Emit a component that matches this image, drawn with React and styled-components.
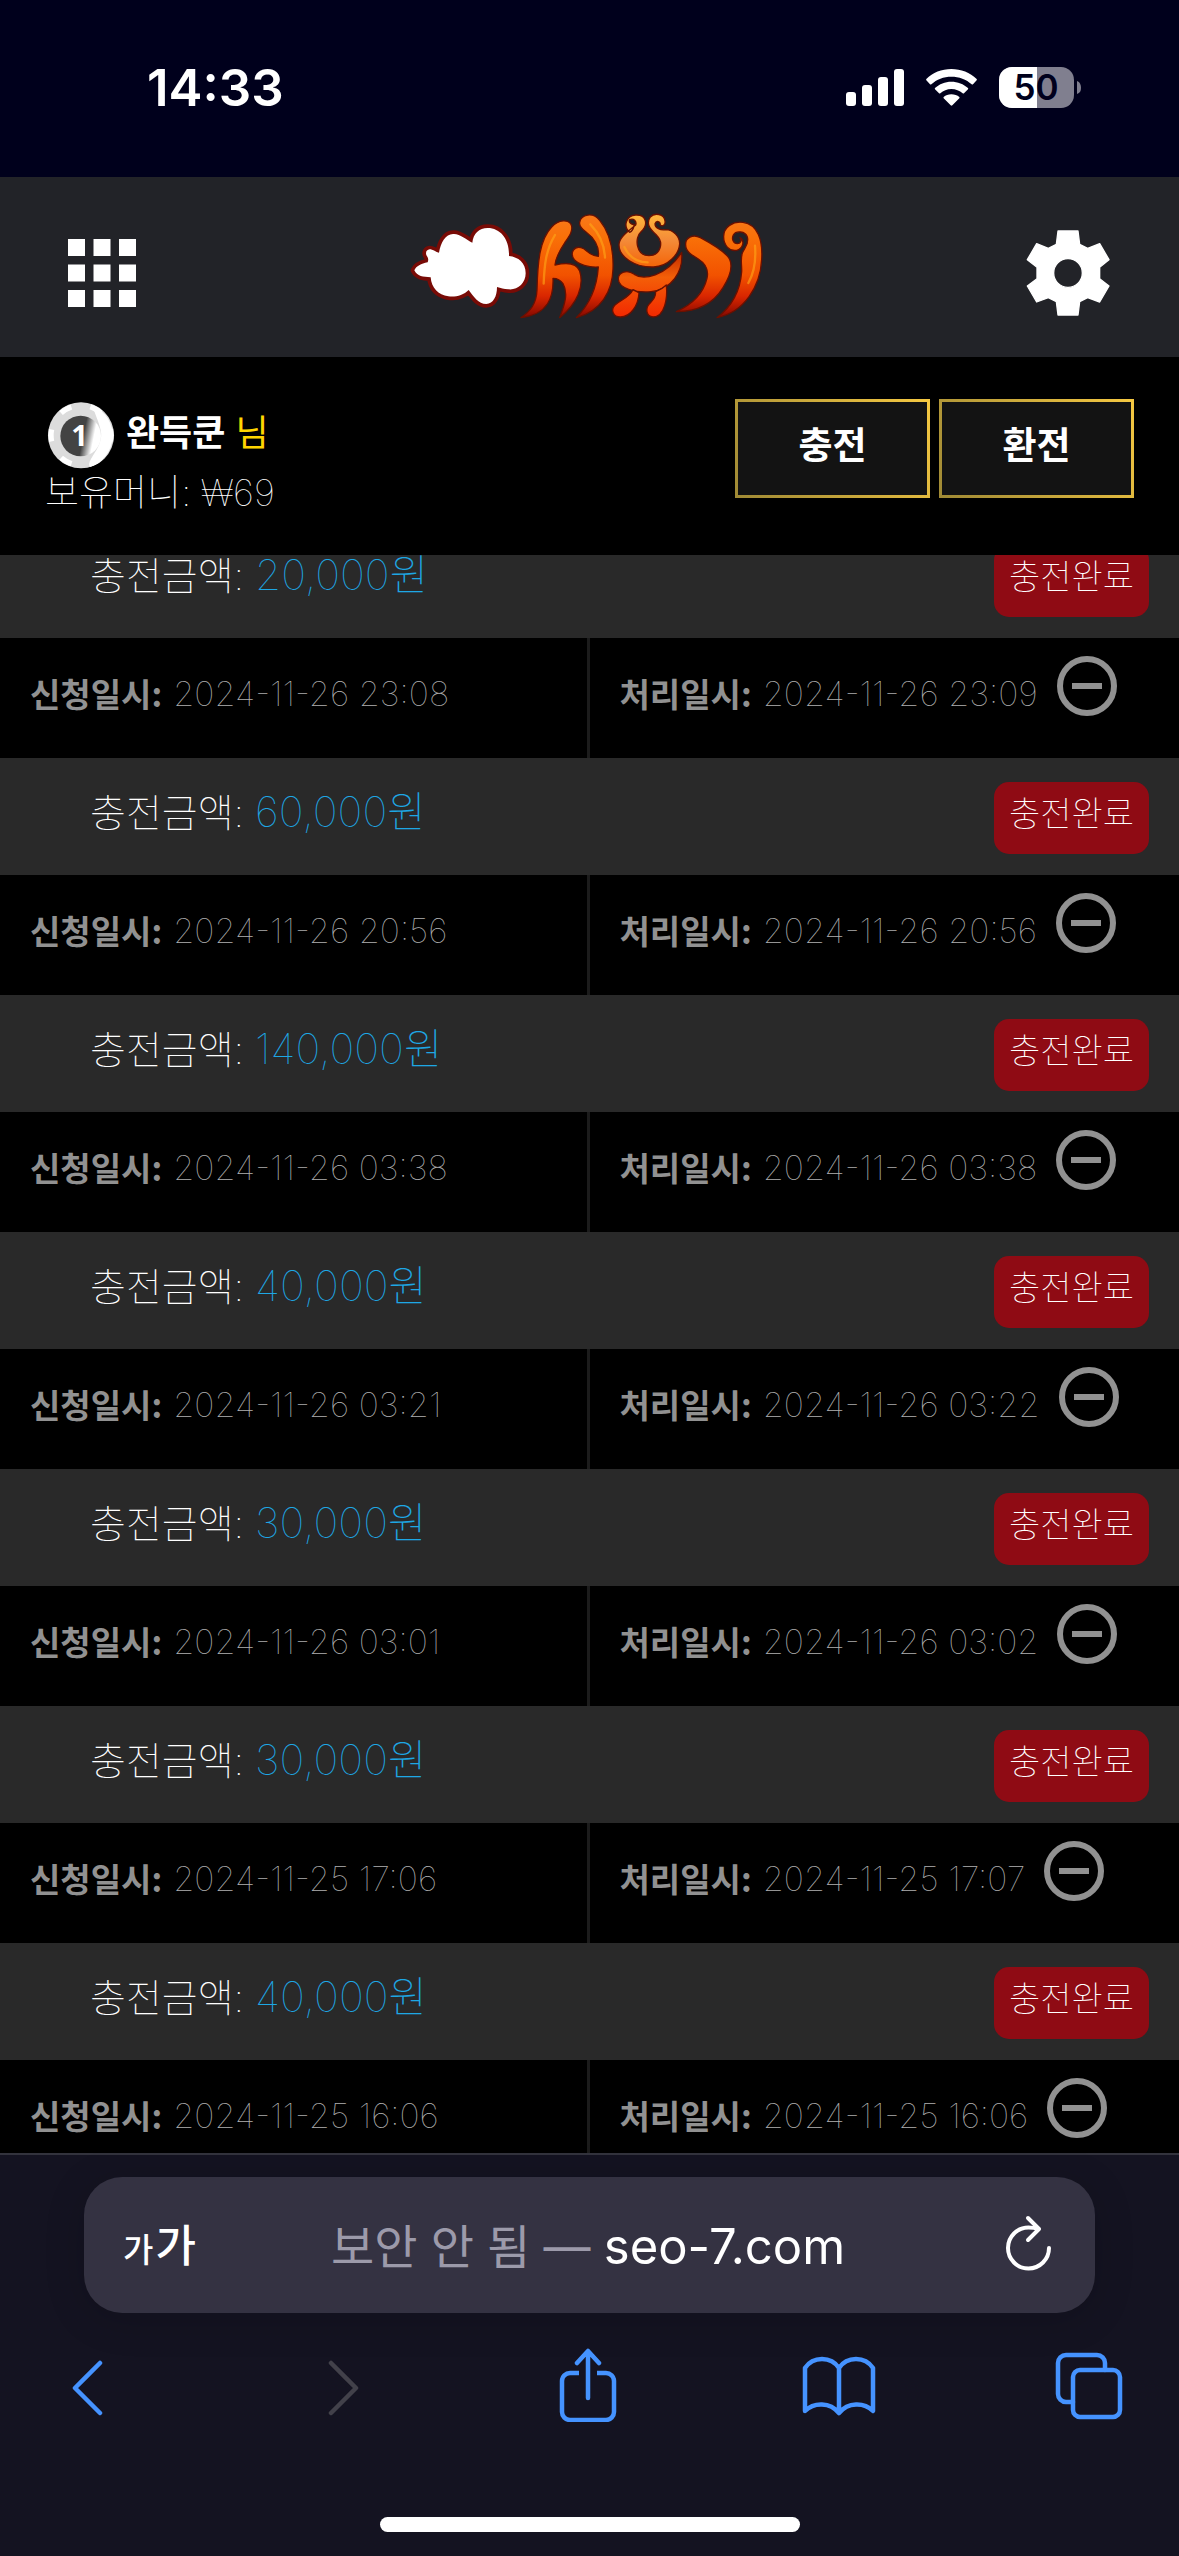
import React, { useLayoutEffect, useRef } from 'react';
import styled, { createGlobalStyle } from 'styled-components';

const GlobalStyle = createGlobalStyle`
  *, *::before, *::after {
    box-sizing: border-box;
  }

  body {
    margin: 0;
    background: #000;
    color: #fff;
    font-family: Inter, "Noto Sans CJK KR", sans-serif;
  }

  button, input {
    margin: 0;
    padding: 0;
    border: 0;
    background: none;
    color: inherit;
    font: inherit;
  }

  svg {
    display: block;
  }
`;

const Screen = styled.div`
  display: flex;
  flex-direction: column;
  height: 100vh;
`;

const StatusBar = styled.div`
  display: flex;
  flex: none;
  align-items: center;
  justify-content: space-between;
  height: 177px;
  padding: 0 98px 2px 147px;
  background: #00001c;
`;

const Clock = styled.time`
  font-size: 51px;
  font-weight: 600;
  line-height: 60px;
`;

const StatusIcons = styled.div`
  display: flex;
  align-items: center;
  gap: 22px;
`;

const Header = styled.header`
  display: grid;
  flex: none;
  grid-template-columns: 1fr auto 1fr;
  align-items: center;
  height: 180px;
  padding: 0 69px 0 68px;
  background: #222328;
`;

const IconButton = styled.button`
  justify-self: ${({ $end }) => ($end ? 'end' : 'start')};
  margin-top: 12px;
  cursor: pointer;
`;

const LogoLink = styled.a`
  display: block;
  margin-bottom: 6px;
`;

const UserPanel = styled.section`
  display: flex;
  flex: none;
  align-items: flex-start;
  justify-content: space-between;
  height: 198px;
  padding: 42px 45px 0;
  background: #000;
`;

const UserName = styled.div`
  display: flex;
  align-items: center;
  gap: 9px;
  height: 72px;
`;

const NameText = styled.div`
  display: flex;
  gap: 10px;
  padding-bottom: 10px;
  font-family: "Noto Sans CJK KR", sans-serif;
  font-size: 36px;
  line-height: 40px;
`;

const Honorific = styled.span`
  color: #ffd500;
`;

const Balance = styled.p`
  margin: 0;
  font-size: 37px;
  font-weight: 100;
  line-height: 44px;
`;

const PanelActions = styled.div`
  display: flex;
  gap: 9px;
`;

const PanelButton = styled.button`
  width: 195px;
  height: 99px;
  padding-bottom: 12px;
  border: 3px solid;
  border-image: linear-gradient(60deg, #a08a35, #f5c842) 1;
  background: #131313;
  font-family: "Noto Sans CJK KR", sans-serif;
  font-size: 37px;
  font-weight: 700;
  cursor: pointer;
`;

const HistoryList = styled.ul`
  flex: 1;
  min-height: 0;
  margin: 0;
  padding: 0;
  overflow-y: auto;
  list-style: none;
  scrollbar-width: none;
`;

const AmountRow = styled.div`
  display: flex;
  align-items: flex-start;
  justify-content: space-between;
  height: 117px;
  padding: 24px 30px 0 90px;
  background: #292929;
`;

const Amount = styled.p`
  margin: 0;
  font-size: 39px;
  font-weight: 100;
  line-height: 60px;
`;

const AmountValue = styled.span`
  color: #1ea7e4;
  font-size: 42px;
`;

const StatusBadge = styled.span`
  height: 72px;
  padding: 0 15px;
  border-radius: 15px;
  background: #8f0b14;
  font-size: 34px;
  font-weight: 100;
  line-height: 64px;
`;

const DateRow = styled.div`
  display: grid;
  grid-template-columns: 1fr 1fr;
  height: 120px;
  background: #000;
`;

const DateCell = styled.div`
  display: flex;
  align-items: flex-start;
  padding: 18px 0 0 30px;
  color: #919191;
  font-size: 34px;
  line-height: 76px;

  &:first-child {
    border-right: 3px solid #1c1c1c;
  }
`;

const DateLabel = styled.strong`
  margin-right: 11px;
  font-family: "Noto Sans CJK KR", sans-serif;
  font-size: 33px;
  line-height: 74px;
`;

const DateValue = styled.time`
  color: #b0b0b0;
  font-weight: 100;
`;

const RemoveButton = styled.button`
  margin-left: 19px;
  cursor: pointer;
`;

const BrowserBar = styled.footer`
  flex: none;
  height: 403px;
  padding-top: 22px;
  border-top: 2px solid #33333d;
  background: #141321;
`;

const AddressBar = styled.div`
  display: grid;
  grid-template-columns: 1fr auto 1fr;
  align-items: center;
  height: 136px;
  margin: 0 84px;
  padding: 0 42px 4px 39px;
  border-radius: 38px;
  background: #343242;
  box-shadow: 0 6px 40px rgba(0, 0, 0, 0.15);
`;

const TextSizeButton = styled.button`
  display: flex;
  align-items: baseline;
  justify-self: start;
  gap: 2px;
  font-size: 44px;
  font-weight: 500;
  cursor: pointer;
`;

const SmallLetter = styled.span`
  font-size: 33px;
`;

const SiteAddress = styled.span`
  font-size: 49px;
`;

const SiteNotice = styled.span`
  color: #9c9aaa;
  font-size: 47px;
`;

const ReloadButton = styled.button`
  justify-self: end;
  cursor: pointer;
`;

const Toolbar = styled.nav`
  display: flex;
  align-items: center;
  justify-content: space-between;
  height: 90px;
  margin-top: 27px;
  padding: 0 48px 0 45px;
`;

const ToolButton = styled.button`
  display: flex;
  justify-content: center;
  width: 84px;
  color: ${({ disabled }) => (disabled ? '#42414a' : '#4593ff')};
`;

const HomeIndicator = styled.div`
  width: 420px;
  height: 15px;
  margin: 87px auto 0;
  border-radius: 8px;
  background: #fff;
`;

const history = [
  { amount: '20,000', requested: '2024-11-26 23:08', processed: '2024-11-26 23:09' },
  { amount: '60,000', requested: '2024-11-26 20:56', processed: '2024-11-26 20:56' },
  { amount: '140,000', requested: '2024-11-26 03:38', processed: '2024-11-26 03:38' },
  { amount: '40,000', requested: '2024-11-26 03:21', processed: '2024-11-26 03:22' },
  { amount: '30,000', requested: '2024-11-26 03:01', processed: '2024-11-26 03:02' },
  { amount: '30,000', requested: '2024-11-25 17:06', processed: '2024-11-25 17:07' },
  { amount: '40,000', requested: '2024-11-25 16:06', processed: '2024-11-25 16:06' },
];

const SignalIcon = () => (
  <svg width="58" height="37" viewBox="0 0 58 37" fill="#fff">
    <rect x="0" y="23" width="10" height="14" rx="3" />
    <rect x="16" y="16" width="10" height="21" rx="3" />
    <rect x="32" y="8" width="10" height="29" rx="3" />
    <rect x="48" y="0" width="10" height="37" rx="3" />
  </svg>
);

const WifiIcon = () => (
  <svg width="51" height="37" viewBox="0 0 153 111" fill="#fff">
    <path d="M76 0C47 0 20 11 1 30c-1 1-1 3 0 4l11 12c1 1 3 1 4 0 16-15 37-23 60-23s45 8 61 23c1 1 3 1 4 0l11-12c1-1 1-3 0-4C132 11 105 0 76 0Z" />
    <path d="M76 38c-19 0-36 7-49 19-1 1-1 3 0 4l12 12c1 1 3 1 4 0 9-8 20-13 33-13s25 5 34 13c1 1 3 1 4 0l12-12c1-1 1-3 0-4-13-12-31-19-50-19Z" />
    <path d="M76 76c-9 0-17 3-23 8-1 1-1 3 0 4l21 21c2 2 3 2 5 0l21-21c1-1 1-3 0-4-6-5-15-8-24-8Z" />
  </svg>
);

const BatteryIcon = () => (
  <svg width="82" height="41" viewBox="0 0 82 41">
    <clipPath id="battery-body">
      <rect width="75" height="41" rx="13" />
    </clipPath>
    <g clipPath="url(#battery-body)">
      <rect width="75" height="41" fill="#807f8f" />
      <rect width="38" height="41" fill="#fff" />
    </g>
    <path d="M78 14c3 1 4 4 4 7s-1 5-4 6Z" fill="#807f8f" />
    <text x="37" y="33" textAnchor="middle" fontSize="35" fontWeight="600" fill="#00001c">
      50
    </text>
  </svg>
);

const GridIcon = () => (
  <svg width="68" height="68" viewBox="0 0 68 68" fill="#fff">
    {[0, 25.5, 51].map((y) =>
      [0, 25.5, 51].map((x) => <rect key={`${x}-${y}`} x={x} y={y} width="17" height="17" />)
    )}
  </svg>
);

const GearIcon = () => (
  <svg width="84" height="86" viewBox="48 45 252 258">
    <path
      fillRule="evenodd"
      fill="#fff"
      stroke="#fff"
      strokeWidth="4"
      strokeLinejoin="round"
      d="M144 48h60l5 40 24 12 36-14 28 48-28 23v34l28 22-28 48-36-13-24 12-5 40h-60l-5-40-24-12-35 13-28-48 29-22v-34l-29-23 28-48 35 14 24-12ZM174 131a43 43 0 1 0 0 86a43 43 0 1 0 0-86Z"
    />
  </svg>
);

const Logo = () => (
  <svg width="400" height="130" viewBox="0 0 1200 390" role="img" aria-label="서유기">
    <defs>
      <linearGradient id="flame" x1="0" y1="40" x2="0" y2="355" gradientUnits="userSpaceOnUse">
        <stop offset="0" stopColor="#f97a1c" />
        <stop offset="0.25" stopColor="#f97008" />
        <stop offset="0.6" stopColor="#f25200" />
        <stop offset="0.8" stopColor="#d92600" />
        <stop offset="1" stopColor="#840800" />
      </linearGradient>
      <linearGradient id="gold" x1="0" y1="45" x2="0" y2="205" gradientUnits="userSpaceOnUse">
        <stop offset="0" stopColor="#ffb83c" />
        <stop offset="0.5" stopColor="#f48a38" />
        <stop offset="1" stopColor="#f46408" />
      </linearGradient>
      <linearGradient id="ember" x1="0" y1="170" x2="0" y2="355" gradientUnits="userSpaceOnUse">
        <stop offset="0" stopColor="#c83200" />
        <stop offset="0.35" stopColor="#f45f08" />
        <stop offset="1" stopColor="#f22800" />
      </linearGradient>
    </defs>
    {/* cloud */}
    <path
      d="M76 214c6-13 20-20 40-24 3-8 2-14-3-20-5-10 0-18 9-19 10 0 15 7 28 10 5-30 20-56 42-56 20-2 38 16 58 26 3-27 20-44 46-44 38 0 66 34 64 84 28 3 50 20 50 52 0 31-25 51-52 48-14 0-22-5-34-7 0 28-11 50-32 51-24 0-38-22-53-42-16 16-40 22-61 19-30-4-51-25-53-57-22-1-41-3-49-21Z"
      fill="#fff"
      stroke="#780b06"
      strokeWidth="22"
      strokeLinejoin="round"
      paintOrder="stroke"
    />
    <g stroke="#6a1000" strokeWidth="4" strokeLinejoin="round">
      <g fill="url(#flame)">
        <path d="M396 356c28-20 46-40 48-82 2-86 8-152 44-190 22-24 50-22 58-8 8 17-4 34-18 54-18 27-28 46-30 68 34-8 64-8 74 18 14 44-6 98-60 140 16-42 26-74 10-102-8-12-18-16-30-16 2 56-14 108-96 118Z" />
        <path d="M572 70c4-24 40-32 60-6 28 34 42 86 40 146-2 68-36 126-110 146 36-36 62-90 66-152-28 2-60-8-72-22-16-22 2-42 20-36 18 4 22 24 52 26 4-30-14-56-36-72-14-10-22-20-20-30Z" />
        <path d="M890 138c-2-22 22-34 44-22 30 16 62 34 82 56 20 24 6 62-14 94-28 46-72 72-140 72 48-22 82-58 92-100 6-26-4-44-26-58-20-12-38-22-38-42Z" />
        <path d="M1004 112c0-28 28-46 58-42 44 6 60 54 56 112-4 80-52 158-134 174 48-36 70-86 74-138 1-20-5-40 3-58 6-14 20-26 14-46-6-18-34-20-42-6-6 12 0 26 12 26 10 0 14-10 8-18 16 10 8 34-10 38-22 4-40-16-39-42Z" />
      </g>
      <path
        fill="url(#gold)"
        d="M722 100c-20-16-12-50 18-52 34-2 38 32 16 50-20 18-16 72 24 72 36 0 44-40 24-60-16-16-36-32-20-56 12-14 42-10 44 12 2 12-8 18-14 12 0-12-12-14-16-4 0 14 16 20 32 18 24 0 42 22 42 42-2 32-34 68-78 70-56 2-104-30-104-66 0-24 30-42 50-60 4-10-6-22-18-16-4 8 6 16 14 14-2 12-8 22-14 24Z"
      />
      <g fill="url(#ember)">
        <path d="M688 240c0-20 26-30 48-14 26 18 94 8 142-66 6 60-32 112-92 118-48 4-98-10-98-38Z" />
        <path d="M732 272c6 4 16 6 18 10-2 36-24 72-56 72-22 0-30-22-16-36 18-16 42-22 54-46Z" />
        <path d="M800 278c14-6 24-12 32-20 4 38-4 96-40 96-22-2-22-26-12-38 12-14 20-20 20-38Z" />
      </g>
    </g>
    <g fill="none" stroke="#ffa818" strokeWidth="7" strokeLinecap="round" opacity="0.6">
      <path d="M498 108c-28 46-32 92-34 146" />
      <path d="M1098 140c4 50-4 84-20 112" />
      <path d="M706 144c14 30 36 46 70 46" />
      <path d="M604 76c26 26 42 58 44 100" />
    </g>
  </svg>
);

const LevelIcon = () => (
  <svg width="72" height="69" viewBox="0 0 216 207" role="img" aria-label="레벨 1">
    <defs>
      <linearGradient id="coin" x1="0" y1="0.4" x2="1" y2="0.6">
        <stop offset="0.56" stopColor="#434343" />
        <stop offset="0.82" stopColor="#fff" />
      </linearGradient>
    </defs>
    <circle cx="108" cy="103" r="99" fill="#dcdcdc" />
    <path d="M145 14a99 99 0 0 1-10 184c-14-20 44-60 32-110-5-28-20-50-22-74Z" fill="#fff" />
    <circle
      cx="108"
      cy="103"
      r="90"
      fill="none"
      stroke="#fff"
      strokeWidth="16"
      strokeDasharray="36 58"
      strokeDashoffset="18"
    />
    <circle cx="107" cy="105" r="61" fill="url(#coin)" />
    <text x="104" y="136" textAnchor="middle" fontFamily="Noto Sans" fontSize="88" fontWeight="700" fill="#fff">
      1
    </text>
  </svg>
);

const MinusCircle = () => (
  <svg width="60" height="60" viewBox="0 0 60 60" fill="none" stroke="#919191" strokeWidth="6">
    <circle cx="30" cy="30" r="27" />
    <path d="M15 30h30" />
  </svg>
);

const ReloadIcon = () => (
  <svg width="48" height="56" viewBox="0 0 48 56" fill="none" stroke="#fff" strokeWidth="4" strokeLinecap="round" strokeLinejoin="round">
    <path d="M44 33a20.500 20.500 0 1 1-20.500-20.500c4 0 7 .5 10 1.500" />
    <path d="M23 3l11 11-11 11" />
  </svg>
);

const ToolIcon = ({ width, height, children }) => (
  <svg
    width={width}
    height={height}
    viewBox={`0 0 ${width} ${height}`}
    fill="none"
    stroke="currentColor"
    strokeWidth="4.500"
    strokeLinecap="round"
    strokeLinejoin="round"
  >
    {children}
  </svg>
);

const HistoryItem = ({ amount, requested, processed }) => (
  <li>
    <AmountRow>
      <Amount>
        충전금액: <AmountValue>{amount}원</AmountValue>
      </Amount>
      <StatusBadge>충전완료</StatusBadge>
    </AmountRow>
    <DateRow>
      <DateCell>
        <DateLabel>신청일시:</DateLabel>
        <DateValue>{requested}</DateValue>
      </DateCell>
      <DateCell>
        <DateLabel>처리일시:</DateLabel>
        <DateValue>{processed}</DateValue>
        <RemoveButton type="button" aria-label="삭제">
          <MinusCircle />
        </RemoveButton>
      </DateCell>
    </DateRow>
  </li>
);

const App = () => {
  const listRef = useRef(null);

  // the list opens slightly scrolled, under the user panel
  useLayoutEffect(() => {
    listRef.current.scrollTop = 34;
  }, []);

  return (
    <Screen>
      <GlobalStyle />
      <StatusBar>
        <Clock>14:33</Clock>
        <StatusIcons>
          <SignalIcon />
          <WifiIcon />
          <BatteryIcon />
        </StatusIcons>
      </StatusBar>
      <Header>
        <IconButton type="button" aria-label="메뉴">
          <GridIcon />
        </IconButton>
        <LogoLink href="/">
          <Logo />
        </LogoLink>
        <IconButton type="button" aria-label="설정" $end>
          <GearIcon />
        </IconButton>
      </Header>
      <UserPanel>
        <div>
          <UserName>
            <LevelIcon />
            <NameText>
              <strong>완득쿤</strong>
              <Honorific>님</Honorific>
            </NameText>
          </UserName>
          <Balance>보유머니: ₩69</Balance>
        </div>
        <PanelActions>
          <PanelButton type="button">충전</PanelButton>
          <PanelButton type="button">환전</PanelButton>
        </PanelActions>
      </UserPanel>
      <HistoryList ref={listRef}>
        {history.map((item) => (
          <HistoryItem key={item.requested} {...item} />
        ))}
      </HistoryList>
      <BrowserBar>
        <AddressBar>
          <TextSizeButton type="button" aria-label="글자 크기">
            <SmallLetter>가</SmallLetter>
            <span>가</span>
          </TextSizeButton>
          <SiteAddress>
            <SiteNotice>보안 안 됨 — </SiteNotice>seo-7.com
          </SiteAddress>
          <ReloadButton type="button" aria-label="새로고침">
            <ReloadIcon />
          </ReloadButton>
        </AddressBar>
        <Toolbar>
          <ToolButton type="button" aria-label="뒤로">
            <ToolIcon width={42} height={72}>
              <path d="M34 14L9 39l25 25" />
            </ToolIcon>
          </ToolButton>
          <ToolButton type="button" aria-label="앞으로" disabled>
            <ToolIcon width={42} height={72}>
              <path d="M14 14l25 25-25 25" />
            </ToolIcon>
          </ToolButton>
          <ToolButton type="button" aria-label="공유">
            <ToolIcon width={58} height={74}>
              <path d="M20 25h-9a8 8 0 0 0-8 8v31a8 8 0 0 0 8 8h36a8 8 0 0 0 8-8V33a8 8 0 0 0-8-8h-9" strokeLinecap="butt" />
              <path d="M29 50V4M18 15L29 3l11 12" />
            </ToolIcon>
          </ToolButton>
          <ToolButton type="button" aria-label="책갈피">
            <ToolIcon width={74} height={62}>
              <path d="M37 59V14C29 2 11 2 3 14v43c9-9 25-9 34 2 9-11 25-11 34-2V14C63 2 45 2 37 14" />
            </ToolIcon>
          </ToolButton>
          <ToolButton type="button" aria-label="탭">
            <ToolIcon width={68} height={70}>
              <rect x="18" y="20" width="47" height="47" rx="7" />
              <path d="M18 52h-7a8 8 0 0 1-8-8V13a8 8 0 0 1 8-8h31a8 8 0 0 1 8 8v7" />
            </ToolIcon>
          </ToolButton>
        </Toolbar>
        <HomeIndicator />
      </BrowserBar>
    </Screen>
  );
};

export default App;
